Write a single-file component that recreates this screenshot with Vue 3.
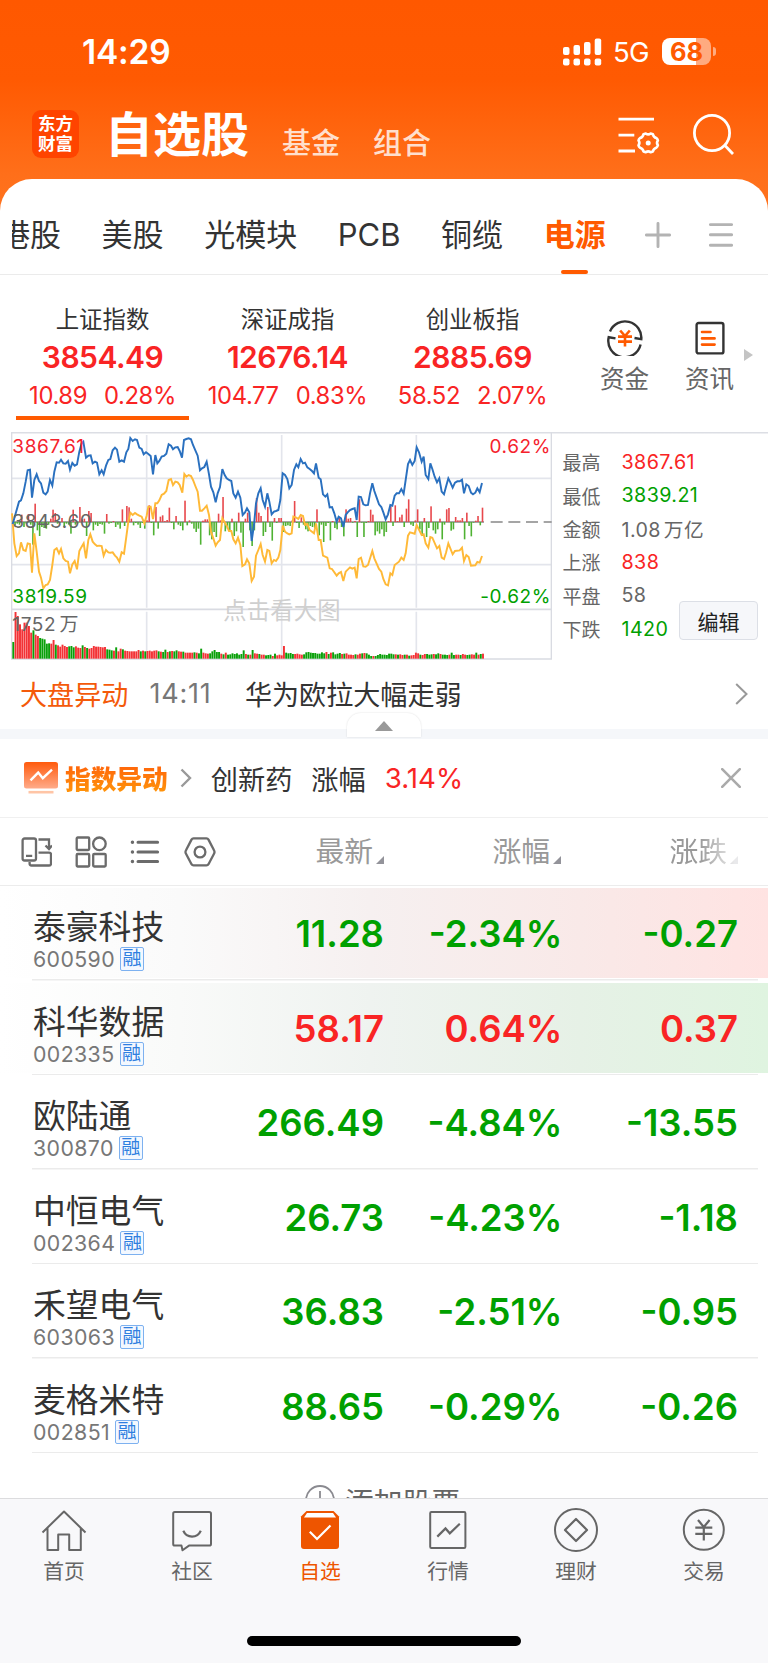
<template>
  <div class="page">
    <header class="header">
      <div class="status-bar">
        <span class="time">14:29</span>
        <div class="status-right">
          <svg class="signal" width="39" height="28" viewBox="0 0 39 28" fill="#fff">
            <rect x="0" y="9" width="6.5" height="8" rx="2" />
            <rect x="10.5" y="7" width="6.5" height="10" rx="2" />
            <rect x="21" y="4" width="6.5" height="13" rx="2" />
            <rect x="31.7" y="0.5" width="6.5" height="16.5" rx="2" />
            <rect x="0" y="20.5" width="6.5" height="7" rx="2" />
            <rect x="10.5" y="20.5" width="6.5" height="7" rx="2" />
            <rect x="21" y="20.5" width="6.5" height="7" rx="2" />
            <rect x="31.7" y="20.5" width="6.5" height="7" rx="2" />
          </svg>
          <span class="network">5G</span>
          <div class="battery">68</div>
          <span class="battery-nub"></span>
        </div>
      </div>
      <div class="title-bar">
        <div class="logo">
          <span>东方</span>
          <span>财富</span>
        </div>
        <h1 class="title">自选股</h1>
        <span class="sub-title">基金</span>
        <span class="sub-title">组合</span>
        <svg class="icon-manage" width="42" height="40" viewBox="0 0 42 40" fill="none" stroke="#fff" stroke-width="2.8">
          <path d="M0.5 3.2H36M0.5 19.2H16.3M0.5 35H17" />
          <path stroke-width="2.6" stroke-linejoin="round" d="M25.5 18.2l2.3 -0.7q2.4 1.8 4.8 0l2.3 0.7q0.6 3 3.4 3.9q1.4 1.2 1.6 2.4q-1.8 2.4 0 4.8q-0.4 1.6 -1.6 2.4q-2.8 0.8 -3.4 3.7l-2.3 0.8q-2.4 -1.8 -4.8 0l-2.3 -0.8q-0.6 -2.9 -3.4 -3.7q-1.2 -0.9 -1.6 -2.4q1.8 -2.4 0 -4.8q0.2 -1.2 1.6 -2.4q2.8 -0.9 3.4 -3.9z" />
          <circle cx="30.2" cy="26.9" r="2.5" fill="#fff" stroke="none" />
        </svg>
        <svg class="icon-search" width="42" height="42" viewBox="0 0 42 42" fill="none" stroke="#fff" stroke-width="2.8">
          <circle cx="19" cy="19" r="17.6" />
          <path d="M31.5 31L40 40" />
        </svg>
      </div>
    </header>

    <main class="card">
      <nav class="groups">
        <div class="group-scroll">
          <div class="group-list">
            <span v-for="g in groups" :key="g" class="group" :class="{ active: g === '电源' }">{{ g }}</span>
          </div>
        </div>
        <svg class="icon-plus" width="26" height="26" viewBox="0 0 26 26" stroke="#b3b3b3" stroke-width="2.9" stroke-linecap="round">
          <path d="M13 1.4V24.6M1.4 13H24.6" />
        </svg>
        <svg class="icon-menu" width="24" height="26" viewBox="0 0 24 26" stroke="#b3b3b3" stroke-width="2.9" stroke-linecap="round">
          <path d="M1.4 2.6H22.6M1.4 12.8H22.6M1.4 23.2H22.6" />
        </svg>
      </nav>

      <section class="indices">
        <div v-for="(item, i) in indices" :key="item.name" class="index" :class="{ current: i === 0 }">
          <div class="index-name">{{ item.name }}</div>
          <div class="index-value">{{ item.value }}</div>
          <div class="index-change">
            <span>{{ item.diff }}</span>
            <span>{{ item.rate }}</span>
          </div>
        </div>
        <div class="shortcut funds">
          <svg width="36" height="36" viewBox="0 0 36 36" fill="none" stroke="#333" stroke-width="2.4">
            <path d="M3 11.5A16.3 16.3 0 0 1 34.3 19.2L27.5 18" />
            <path d="M33.6 24.5A16.3 16.3 0 0 1 1.7 17.2L8.5 18.4" />
            <path stroke="#ff5a00" stroke-width="2.6" d="M13.2 10.5L18 16L22.8 10.5M11 16.6H25M11 21.6H25M18 16V26.5" />
          </svg>
          <span>资金</span>
        </div>
        <div class="shortcut">
          <svg width="36" height="36" viewBox="0 0 36 36" fill="none" stroke="#333" stroke-width="2.4">
            <rect x="4.6" y="3" width="26.8" height="30.4" rx="2" />
            <path stroke="#ff5a00" stroke-width="2.6" stroke-linecap="round" d="M10 12H18.5M10 18.4H22.6M10 24.6H22.6" />
          </svg>
          <span>资讯</span>
        </div>
        <i class="more-arrow"></i>
      </section>

      <section class="market">
        <svg class="chart" width="541" height="228" viewBox="33 21 1623 684" fill="none">
          <g stroke="#e3e5ec" stroke-width="5">
            <path d="M35 160H1655M35 419H1655" />
            <path d="M440 30V548M845 30V548M1249 30V548M440 560V702M845 560V702M1249 560V702" />
            <path stroke="#d9dbe2" d="M35 553H1655" />
            <path stroke="#d9dbe2" stroke-width="4" d="M35 22V702H1654V22" />
          </g>
          <path stroke="#888" stroke-width="4" d="M38 291H1452" />
          <path stroke="#888" stroke-width="4" stroke-dasharray="36 17" d="M1472 291H1655" />
          <rect
            v-for="(v, i) in flow"
            :key="'f' + i"
            :x="36 + i * step"
            :y="v > 0 ? 291 - v : 291"
            width="4.8"
            :height="Math.abs(v)"
            :fill="v > 0 ? '#e8484c' : '#4fb233'"
          />
          <rect
            v-for="(v, i) in volume"
            :key="'v' + i"
            :x="37 + i * step"
            :y="701 - Math.abs(v)"
            width="5.8"
            :height="Math.abs(v)"
            :fill="v > 0 ? '#f33236' : '#0aa00a'"
          />
          <polyline :points="avgLine" stroke="#ffb937" stroke-width="5.8" />
          <polyline :points="priceLine" stroke="#2a70bf" stroke-width="5.8" />
          <g class="chart-text">
            <text x="37" y="84" fill="#f5222d">3867.61</text>
            <text x="37" y="309" fill="#666">3843.60</text>
            <text x="37" y="533" fill="#00a000">3819.59</text>
            <text x="37" y="618" fill="#666">1752<tspan dx="10">万</tspan></text>
            <text x="1653" y="84" text-anchor="end" fill="#f5222d">0.62%</text>
            <text x="1653" y="533" text-anchor="end" fill="#00a000">-0.62%</text>
            <text class="hint" x="670" y="582" fill="#cfcfcf">点击看大图</text>
          </g>
        </svg>
        <dl class="summary">
          <div v-for="s in summary" :key="s.label" class="summary-row">
            <dt>{{ s.label }}</dt>
            <dd :class="s.color">{{ s.value }}</dd>
          </div>
          <button class="edit">编辑</button>
        </dl>
      </section>

      <section class="news">
        <span class="news-tag">大盘异动</span>
        <span class="news-time">14:11</span>
        <span class="news-text">华为欧拉大幅走弱</span>
        <svg class="news-arrow" width="13" height="22" viewBox="0 0 13 22" fill="none" stroke="#999" stroke-width="2">
          <path d="M1.2 1L11.5 11L1.2 21" />
        </svg>
      </section>
      <div class="divider-strip">
        <div class="collapse"><i></i></div>
      </div>

      <section class="alert">
        <svg class="alert-icon" width="34" height="32" viewBox="0 0 34 32" fill="none">
          <defs>
            <linearGradient id="alertFill" x1="0" y1="0" x2="0" y2="1">
              <stop offset="0" stop-color="#ff5a0c" />
              <stop offset="1" stop-color="#ffab8a" />
            </linearGradient>
          </defs>
          <rect x="0" y="0" width="34" height="26.5" rx="2.5" fill="url(#alertFill)" />
          <path d="M6.5 18.3L14.2 10.6L18.8 16.2L28 7.6" stroke="#fff" stroke-width="2.4" />
          <path d="M4.5 30.2H29.5" stroke="#ffc5a6" stroke-width="2.6" />
        </svg>
        <span class="alert-title">指数异动</span>
        <svg class="alert-arrow" width="12" height="20" viewBox="0 0 12 20" fill="none" stroke="#999" stroke-width="2.4">
          <path d="M1.5 1.5L10 10L1.5 18.5" />
        </svg>
        <span class="alert-name">创新药</span>
        <span class="alert-label">涨幅</span>
        <span class="alert-rate">3.14%</span>
        <svg class="alert-close" width="20" height="20" viewBox="0 0 20 20" stroke="#aaa" stroke-width="2.6" stroke-linecap="round">
          <path d="M1.2 1.2L18.8 18.8M18.8 1.2L1.2 18.8" />
        </svg>
      </section>

      <section class="table-head">
        <div class="tools">
          <svg width="32" height="32" viewBox="0 0 32 32" fill="none" stroke="#6b6b6b" stroke-width="2.3">
            <rect x="2.6" y="2.5" width="13.4" height="22" rx="2" />
            <path d="M6 19.8H12.2M18.5 3.5H29V11.5M25.5 9.5L29 13L32 9.5" />
            <path d="M18.5 16.7H29.2Q31 16.7 31 18.5V27.5Q31 29.5 29.2 29.5H11.5Q9.6 29.5 9.6 27.5V26" />
          </svg>
          <svg width="32" height="32" viewBox="0 0 32 32" fill="none" stroke="#6b6b6b" stroke-width="2.3">
            <rect x="1.7" y="1.5" width="12.5" height="12.5" rx="1" />
            <circle cx="24.4" cy="7.8" r="6.3" />
            <rect x="1.7" y="18" width="12.5" height="12.5" rx="1" />
            <rect x="18.2" y="18" width="12.5" height="12.5" rx="1" />
          </svg>
          <svg width="32" height="32" viewBox="0 0 32 32" fill="none" stroke="#6b6b6b" stroke-width="3" stroke-linecap="round">
            <path d="M9 6.2H28.6M9 16H28.6M9 25.5H28.6" />
            <path stroke-width="3.4" d="M3.4 6.2H3.5M3.4 16H3.5M3.4 25.5H3.5" />
          </svg>
          <svg width="32" height="32" viewBox="0 0 32 32" fill="none" stroke="#6b6b6b" stroke-width="2.3" stroke-linejoin="round">
            <path d="M9.5 2.4H22.5Q23.8 2.4 24.5 3.6L30 14.2Q31 16 30 17.8L24.5 28.2Q23.8 29.4 22.5 29.4H9.5Q8.2 29.4 7.5 28.2L2 17.8Q1 16 2 14.2L7.5 3.6Q8.2 2.4 9.5 2.4Z" />
            <circle cx="16" cy="16" r="5.4" />
          </svg>
        </div>
        <span class="head-cell col-price">最新<i></i></span>
        <span class="head-cell col-rate">涨幅<i></i></span>
        <span class="head-cell col-diff fading">涨跌<i></i></span>
      </section>

      <section class="stocks">
        <div v-for="s in stocks" :key="s.code" class="stock" :class="s.flash">
          <div class="stock-info">
            <div class="stock-name">{{ s.name }}</div>
            <div class="stock-code">{{ s.code }}<span class="tag">融</span></div>
          </div>
          <span class="num col-price" :class="s.dir">{{ s.price }}</span>
          <span class="num col-rate" :class="s.dir">{{ s.rate }}</span>
          <span class="num col-diff" :class="s.dir">{{ s.diff }}</span>
        </div>
      </section>

      <div class="add-stock">
        <svg width="30" height="30" viewBox="0 0 30 30" fill="none" stroke="#8a8a90" stroke-width="1.8">
          <circle cx="15" cy="15" r="14" />
          <path d="M15 6V24M6 15H24" />
        </svg>
        <span>添加股票</span>
      </div>
    </main>

    <footer class="tab-bar">
      <div class="tabs">
        <div class="tab">
          <svg width="46" height="44" viewBox="0 0 46 44" fill="none" stroke="#666" stroke-width="2">
            <path d="M1.5 23.5L23 2.5L44.5 23.5M6.5 19V41H17.2V25.5H28.2V41H39.8V19" stroke-linejoin="round" />
          </svg>
          <span>首页</span>
        </div>
        <div class="tab">
          <svg width="46" height="44" viewBox="0 0 46 44" fill="none" stroke="#666" stroke-width="2" stroke-linejoin="round">
            <path d="M5.8 3H40.2Q42 3 42 4.8V35Q42 36.6 40.2 36.6H20L13.5 41.3L12.5 36.6H5.8Q4.2 36.6 4.2 35V4.8Q4.2 3 5.8 3Z" />
            <path stroke-width="2.2" d="M14.3 21.8C17.8 29.6 28.2 29.6 31.8 21.8" />
          </svg>
          <span>社区</span>
        </div>
        <div class="tab active">
          <svg width="46" height="44" viewBox="0 0 46 44" fill="none">
            <path fill="#ee5500" d="M9.5 2H36.5L42 7.5V37Q42 40 39 40H7Q4 40 4 37V7.5Z" />
            <path fill="#fff" d="M10 4H36L39 8.4H7Z" />
            <path stroke="#fff" stroke-width="2.2" d="M12.8 22.8L20 30L33.5 16.5" />
          </svg>
          <span>自选</span>
        </div>
        <div class="tab">
          <svg width="46" height="44" viewBox="0 0 46 44" fill="none" stroke="#666" stroke-width="2">
            <rect x="5.2" y="3" width="35.2" height="36" rx="1.2" />
            <path stroke-width="2.2" d="M12.3 27.6L20.5 19.4L24.8 24.3L34.8 14.8" />
          </svg>
          <span>行情</span>
        </div>
        <div class="tab">
          <svg width="46" height="44" viewBox="0 0 46 44" fill="none" stroke="#666" stroke-width="2">
            <circle cx="23" cy="21" r="21" />
            <path stroke-linejoin="round" stroke-width="2.2" d="M23 10L34 21L23 32L12 21Z" />
          </svg>
          <span>理财</span>
        </div>
        <div class="tab">
          <svg width="46" height="44" viewBox="0 0 46 44" fill="none" stroke="#666" stroke-width="2">
            <circle cx="22.8" cy="20.8" r="20" />
            <path stroke-width="2.2" d="M17 11L22.8 18L28.6 11M14.3 18.6H31.3M14.3 24.8H31.3M22.8 18V31.5" />
          </svg>
          <span>交易</span>
        </div>
      </div>
      <div class="home-indicator"></div>
    </footer>
  </div>
</template>

<script setup>
const groups = ['港股', '美股', '光模块', 'PCB', '铜缆', '电源']

const indices = [
  { name: '上证指数', value: '3854.49', diff: '10.89', rate: '0.28%' },
  { name: '深证成指', value: '12676.14', diff: '104.77', rate: '0.83%' },
  { name: '创业板指', value: '2885.69', diff: '58.52', rate: '2.07%' }
]

const summary = [
  { label: '最高', value: '3867.61', color: 'up' },
  { label: '最低', value: '3839.21', color: 'down' },
  { label: '金额', value: '1.08 万亿', color: '' },
  { label: '上涨', value: '838', color: 'up' },
  { label: '平盘', value: '58', color: '' },
  { label: '下跌', value: '1420', color: 'down' }
]

const stocks = [
  { name: '泰豪科技', code: '600590', price: '11.28', rate: '-2.34%', diff: '-0.27', dir: 'down', flash: 'flash-red' },
  { name: '科华数据', code: '002335', price: '58.17', rate: '0.64%', diff: '0.37', dir: 'up', flash: 'flash-green' },
  { name: '欧陆通', code: '300870', price: '266.49', rate: '-4.84%', diff: '-13.55', dir: 'down' },
  { name: '中恒电气', code: '002364', price: '26.73', rate: '-4.23%', diff: '-1.18', dir: 'down' },
  { name: '禾望电气', code: '603063', price: '36.83', rate: '-2.51%', diff: '-0.95', dir: 'down' },
  { name: '麦格米特', code: '002851', price: '88.65', rate: '-0.29%', diff: '-0.26', dir: 'down' }
]

// 分时图每根柱子的间距
const step = 6.71

// 价格线
const priceLine = '38,297 48,262 57,230 63,226 70,205 77,170 83,136 90,134 96,218 103,165 110,148 117,168 123,175 130,203 137,208 143,200 150,165 157,182 163,140 170,112 177,113 183,104 190,115 197,116 204,108 210,134 217,114 224,122 231,118 238,80 245,55 250,50 258,98 265,92 272,91 278,115 285,110 291,113 298,148 305,136 311,148 318,122 325,105 331,102 338,76 345,68 351,74 358,110 365,106 372,110 379,82 385,72 391,39 398,48 405,43 411,45 418,68 425,72 431,88 438,82 445,87 452,93 459,148 466,90 472,115 478,108 485,95 492,93 499,86 506,58 513,62 519,73 526,67 533,66 539,78 546,98 552,45 559,42 566,40 573,43 579,60 586,76 593,92 600,136 606,130 613,126 620,110 627,148 633,185 640,202 647,232 653,205 660,186 667,132 674,150 680,160 687,165 694,168 700,205 707,218 714,200 721,218 728,270 735,262 741,250 748,262 755,348 762,300 768,235 775,205 782,190 788,225 795,245 802,205 808,230 815,268 822,260 828,258 835,255 841,225 848,145 855,150 862,162 868,190 875,180 882,135 889,118 895,127 902,102 909,115 915,113 922,127 929,132 936,138 942,145 948,115 956,158 962,163 969,208 976,215 982,208 989,247 996,246 1003,265 1010,290 1016,275 1023,280 1030,306 1037,270 1043,262 1050,255 1057,252 1064,250 1070,285 1076,215 1083,216 1090,238 1097,241 1104,240 1110,205 1117,175 1123,198 1130,218 1137,238 1144,246 1150,262 1157,283 1164,268 1171,240 1177,242 1184,212 1190,205 1197,205 1204,192 1211,206 1217,165 1224,117 1230,105 1237,120 1244,108 1250,67 1257,82 1265,110 1271,95 1277,150 1285,162 1291,115 1297,132 1304,155 1311,172 1318,160 1325,200 1332,208 1338,185 1345,160 1351,172 1358,188 1365,173 1372,169 1379,169 1386,164 1392,205 1399,178 1406,183 1413,203 1419,208 1426,203 1432,190 1439,202 1446,174'

// 黄线（不加权）
const avgLine = '36,265 43,355 50,393 57,385 63,352 70,375 77,378 83,355 90,357 96,443 103,325 110,380 117,440 123,458 130,490 137,480 143,478 150,465 157,420 163,375 170,370 177,385 183,372 190,400 197,408 204,410 210,445 217,418 224,408 231,433 238,378 245,365 251,355 258,400 265,345 271,328 278,350 285,358 291,363 298,362 305,363 311,392 318,375 325,382 331,383 338,382 345,392 351,398 358,410 365,382 372,386 379,335 385,290 391,263 398,270 405,264 411,268 418,272 425,275 433,295 440,272 445,245 452,245 459,282 466,235 472,235 478,226 485,210 492,206 499,198 506,165 513,162 519,180 526,170 533,172 539,180 547,203 553,147 559,155 566,150 573,153 579,165 586,183 593,200 600,257 606,257 613,250 620,242 627,270 633,320 640,340 647,362 653,352 660,345 667,280 674,292 680,302 687,318 694,318 700,343 707,355 714,338 721,360 727,423 735,418 741,403 748,416 755,468 762,455 768,392 775,375 782,357 788,390 795,410 802,375 808,378 815,415 822,405 828,408 835,398 841,375 848,302 855,320 862,325 868,328 875,325 880,275 889,278 895,282 902,270 909,273 915,300 922,297 929,315 936,320 942,325 948,295 956,345 962,345 969,392 982,398 989,430 996,432 1010,452 1016,445 1023,441 1030,468 1037,440 1050,427 1057,431 1064,428 1070,460 1076,402 1083,398 1090,424 1097,425 1104,420 1117,378 1123,400 1137,432 1144,440 1150,462 1157,478 1164,481 1171,445 1177,450 1184,420 1197,410 1204,398 1211,405 1217,385 1224,332 1230,322 1244,326 1250,300 1265,330 1271,328 1277,355 1285,368 1291,336 1297,338 1311,370 1318,363 1325,398 1332,402 1338,383 1345,355 1358,388 1365,378 1379,376 1386,368 1392,408 1399,390 1406,396 1413,422 1426,421 1432,411 1439,413 1446,393'

// 红绿柱，正数向上为红，负数向下为绿
const flow = [
  -5, -10, -5, -8, 22, -15, -5, 24, -8, -68, 55, -25, -42, -15, -18, -20, -8, 10, 37, 27,
  -5, -3, 12, -15, -5, -8, -35, 37, -8, -5, 45, 8, 10, -42, 33, 27, -25, -8, -12, -6,
  -8, -35, 24, -5, -3, 3, -15, -8, -20, 38, -12, 48, 44, 10, -10, -3, -8, -18, -3, -20,
  5, 50, -3, -40, 45, -20, 16, 20, 3, 6, 43, -3, -22, 18, -8, -12, -25, 64, -10, 5,
  -5, -20, -30, -20, -68, 4, 8, 8, -40, -52, -30, -45, 25, 5, 75, -28, -20, -28, 10, -42,
  -28, 28, -32, -75, 10, 28, -25, -72, -25, 72, 28, 18, -42, -30, 45, -15, -56, 12, -3, 12,
  12, -30, -12, -10, -12, 5, 63, -3, -18, 14, -8, -22, -28, -12, -15, -18, 38, -40, -8, -60,
  -12, -3, -55, 3, -18, -22, 14, -15, -43, 38, 10, 12, -2, 3, -45, 68, -2, -45, -3, 3,
  37, 22, -40, -28, -35, -22, -43, -30, 3, 47, -12, 50, 3, 14, 22, -15, 40, 68, -8, -12,
  5, 38, -22, -42, 12, -45, -18, 47, -25, -35, -22, 10, -52, -8, 38, 42, -26, -22, 15, 5,
  5, 12, -52, 28, -12, -43, -2, 4, 18, -10, 43
]

// 成交量，正负只区分颜色
const volume = [
  -50, 140, 128, 103, 88, 108, 108, 98, 78, -85, 72, 68, -62, -60, -58, -45, -46, 45, 56, -42,
  40, 36, 42, 38, 35, -37, -38, -34, 37, 33, 32, -40, 35, -32, 30, 32, 38, 36, 36, 35,
  34, 35, -28, -27, -25, 24, -34, 22, 30, -28, 24, 23, 22, 22, 22, 22, 26, -22, 24, -22,
  23, 24, 22, 24, 25, -22, 21, -20, -27, 20, -22, 23, -22, -25, 22, 21, -21, 18, 18, 18,
  18, -19, 18, -16, -30, 18, 16, 15, -16, -22, -26, -20, -20, 15, -13, 18, -12, -13, -16, -14,
  -16, -12, -14, -25, 14, -12, 12, -26, 16, 15, -14, 12, 12, -10, -11, -12, 8, -15, 10, 12,
  10, 38, -18, -16, -17, -14, 14, 15, 13, 12, -13, -19, -20, -18, -17, -17, -15, -15, -19, -16,
  20, -14, 18, -19, -13, -15, -17, 14, -15, 16, 12, 12, 11, -13, 12, 15, -16, 17, -16, -12,
  -8, 8, -8, -11, -14, -12, -12, -11, -15, -15, -13, 13, -12, 13, 11, -12, 12, -9, 10, 11,
  18, 16, -12, 11, 14, -14, -12, -13, 14, -13, -16, 14, -12, -12, -11, 12, -18, -11, 12, 12,
  -11, 14, 12, -11, -12, 13, 12, -18, 12, -14, 15
]
</script>

<style>
body {
  margin: 0;
  background: #fff;
}
</style>

<style scoped>
.page {
  width: 768px;
  height: 1663px;
  overflow: hidden;
  background: #fff;
  color: #333;
  font-family: Inter, "Noto Sans CJK SC", sans-serif;
  display: flex;
  flex-direction: column;
}

.up {
  color: #f92424;
}

.down {
  color: #00a000;
}

/* 顶部 */
.header {
  height: 219px;
  margin-bottom: -40px;
  flex: none;
  background: linear-gradient(#ff5800 0, #ff5a02 80px, #ff6f1a 175px, #ff741f 219px);
  color: #fff;
}

.status-bar {
  height: 103px;
  padding: 0 52px 0 82px;
  display: flex;
  align-items: center;
  justify-content: space-between;
}

.time {
  font-size: 33.5px;
  font-weight: 600;
  letter-spacing: -0.2px;
}

.status-right {
  display: flex;
  align-items: center;
}

.network {
  width: 37px;
  margin: 0 12px 0 11px;
  font-size: 27.5px;
  line-height: 28px;
  letter-spacing: -0.8px;
}

.battery {
  width: 49px;
  height: 27px;
  border-radius: 8px;
  background: linear-gradient(90deg, #fff 69%, #ffab80 69%);
  color: #ff5a00;
  font-size: 25.5px;
  font-weight: 700;
  line-height: 27px;
  text-align: center;
}

.battery-nub {
  width: 3px;
  height: 9px;
  margin-left: 2px;
  border-radius: 0 3px 3px 0;
  background: #ffab80;
}

.title-bar {
  height: 76px;
  padding: 0 33px 0 32px;
  display: flex;
  align-items: flex-start;
}

.logo {
  width: 47px;
  height: 42px;
  margin-top: 7px;
  padding: 3px 0;
  border-radius: 9px;
  background: #ff4400;
  display: flex;
  flex-direction: column;
  align-items: center;
  justify-content: center;
  font-size: 17.5px;
  line-height: 20px;
  font-weight: 700;
}

.title {
  margin: 1px 0 0 26px;
  font-size: 48px;
  line-height: 62px;
  font-weight: 700;
}

.sub-title {
  margin: 21px 0 0 33px;
  font-size: 29px;
  line-height: 40px;
  font-weight: 500;
  color: #ffdfcd;
}

.icon-manage {
  margin: 13px 0 0 auto;
}

.icon-search {
  margin: 11px 0 0 33px;
}

/* 内容卡片 */
.card {
  height: 1319px;
  flex: none;
  overflow: hidden;
  border-radius: 32px 32px 0 0;
  background: #fff;
}

.groups {
  height: 96px;
  padding: 0 35px 0 12px;
  border-bottom: 1px solid #ebebeb;
  box-sizing: border-box;
  display: flex;
}

.group-scroll {
  width: 596px;
  overflow: hidden;
}

.group-list {
  margin-left: -13px;
  width: 620px;
  display: flex;
  gap: 40.6px;
}

.group {
  padding-top: 36px;
  height: 59px;
  line-height: 40px;
  font-size: 31px;
  flex: none;
}

.group.active {
  color: #ff5a00;
  font-weight: 700;
}

.group.active::after {
  content: "";
  display: block;
  width: 27px;
  height: 4px;
  margin: 15px auto 0;
  border-radius: 2px;
  background: #ff5a00;
}

.icon-plus {
  margin: 43px 0 0 37px;
}

.icon-menu {
  margin: 43px 0 0 auto;
}

.indices {
  height: 157px;
  padding-left: 16px;
  display: flex;
}

.index {
  width: 173px;
  height: 145px;
  margin-right: 12px;
  box-sizing: border-box;
  padding-top: 30px;
  text-align: center;
  white-space: nowrap;
}

.index.current {
  border-bottom: 4px solid #ff5a00;
}

.index-name {
  font-size: 23.4px;
  line-height: 30px;
}

.index-value {
  margin-top: 3px;
  font-size: 30px;
  line-height: 38px;
  font-weight: 600;
  letter-spacing: -0.5px;
  color: #f92424;
}

.index-change {
  margin-top: 5px;
  display: flex;
  justify-content: center;
  gap: 17px;
  font-size: 23.8px;
  line-height: 30px;
  letter-spacing: -0.4px;
  color: #f92424;
}

.shortcut {
  width: 50px;
  padding-top: 45px;
  display: flex;
  flex-direction: column;
  align-items: center;
  font-size: 24.5px;
  line-height: 30px;
  color: #666;
}

.shortcut span {
  margin: 8px 1px 0 0;
}

.shortcut.funds {
  margin: 0 35px 0 29px;
}

.more-arrow {
  height: 0;
  margin: 74px 0 0 9px;
  border: 6px solid transparent;
  border-left: 9px solid #c4c4c4;
  border-right: 0;
}

.market {
  height: 228px;
  padding-left: 11px;
  display: flex;
  background: linear-gradient(#dcdee4, #dcdee4) 11px 0 / 100% 1.5px no-repeat;
}

.chart {
  flex: none;
}

.chart-text {
  font-size: 57px;
  letter-spacing: 1.8px;
}

.chart-text .hint {
  font-size: 70px;
  letter-spacing: 0.5px;
}

.summary {
  flex: 1;
  margin: 0;
  padding: 13px 0 0 10.5px;
  position: relative;
}

.summary-row {
  height: 33.4px;
  display: flex;
  align-items: center;
  font-size: 19px;
  color: #666;
}

.summary-row dt {
  width: 59px;
}

.summary-row dd {
  margin: 0;
  font-size: 19.7px;
  letter-spacing: 0.4px;
  word-spacing: -3px;
}

.summary-row dd.up {
  color: #f92424;
}

.summary-row dd.down {
  color: #00a000;
}

.edit {
  position: absolute;
  left: 127px;
  top: 169px;
  width: 79px;
  height: 39px;
  padding: 0;
  border: 1px solid #dcdfe6;
  border-radius: 4px;
  background: #f6f7fa;
  color: #222;
  font-family: inherit;
  font-size: 21px;
}

.news {
  height: 69px;
  padding: 0 20px 2px;
  box-sizing: border-box;
  display: flex;
  align-items: center;
  font-size: 27.1px;
}

.news-tag {
  color: #f45a0a;
}

.news-time {
  width: 95.5px;
  margin-left: 21px;
  font-size: 27px;
  letter-spacing: 0.8px;
  color: #777;
}

.news-arrow {
  margin-left: auto;
}

.divider-strip {
  height: 10px;
  background: #f5f7fa;
  position: relative;
}

.collapse {
  position: absolute;
  left: 347px;
  top: -16px;
  width: 74px;
  height: 24px;
  border-radius: 14px 14px 0 0;
  background: #fff;
  box-shadow: 0 0 2px rgba(0, 0, 0, 0.14);
  display: flex;
  align-items: center;
  justify-content: center;
}

.collapse i {
  margin-top: 2px;
  border: 9.5px solid transparent;
  border-top: 0;
  border-bottom: 10px solid #999;
}

.alert {
  height: 79px;
  padding: 0 27px 1px 24px;
  border-bottom: 1.5px solid #f0f0f0;
  box-sizing: border-box;
  display: flex;
  align-items: center;
  font-size: 27.2px;
}

.alert-title {
  margin-left: 7px;
  font-size: 25.7px;
  font-weight: 900;
  background: linear-gradient(#ff5a0a, #ff9a0a);
  -webkit-background-clip: text;
  background-clip: text;
  color: transparent;
}

.alert-arrow {
  margin-left: 12px;
}

.alert-name {
  margin-left: 19px;
}

.alert-label {
  margin-left: 19px;
}

.alert-rate {
  margin-left: 19px;
  font-size: 27.7px;
  color: #f92424;
}

.alert-close {
  margin-left: auto;
}

/* 列表 */
.table-head {
  height: 68px;
  border-bottom: 1.5px solid #ececec;
  box-sizing: border-box;
  display: flex;
  align-items: center;
}

.tools {
  width: 215px;
  padding-left: 20px;
  box-sizing: border-box;
  display: flex;
  gap: 22.5px;
}

.tools svg {
  flex: none;
}

.head-cell {
  margin-top: 1px;
  display: flex;
  align-items: flex-end;
  justify-content: flex-end;
  font-size: 28.8px;
  line-height: 38px;
  color: #999;
}

.head-cell i {
  margin: 0 0 7px 3px;
  border-left: 8px solid transparent;
  border-bottom: 8px solid #93939a;
}

.head-cell.col-price {
  width: 169px;
}

.head-cell.col-rate {
  width: 177px;
}

.head-cell.col-diff {
  width: 177px;
}

.fading {
  -webkit-mask: linear-gradient(90deg, #000 78%, rgba(0, 0, 0, 0.2) 98%);
  mask: linear-gradient(90deg, #000 78%, rgba(0, 0, 0, 0.2) 98%);
}

.stock {
  height: 94.5px;
  box-sizing: border-box;
  padding-left: 33px;
  display: flex;
  background:
    linear-gradient(#ebebeb, #ebebeb) 32px 100% / 726px 1.5px no-repeat;
}

.stock.flash-red {
  background:
    linear-gradient(#ebebeb, #ebebeb) 32px 100% / 726px 1.5px no-repeat,
    linear-gradient(90deg, #fff 0, #fafafa 180px, #f6f0f0 370px, #f9e9e8 580px, #ffe3e2 768px) 0 2px / 100% 90px no-repeat;
}

.stock.flash-green {
  background:
    linear-gradient(#ebebeb, #ebebeb) 32px 100% / 726px 1.5px no-repeat,
    linear-gradient(90deg, #fff 0, #f9faf9 180px, #eff3f0 370px, #e6f1e6 580px, #dff4e0 768px) 0 2px / 100% 90px no-repeat;
}

.stock-info {
  width: 180px;
  flex: none;
}

.stock-name {
  margin-top: 20px;
  font-size: 32.8px;
  line-height: 42px;
}

.stock-code {
  display: flex;
  align-items: center;
  height: 24px;
  margin-top: -1px;
  font-size: 21.3px;
  line-height: 24px;
  letter-spacing: 0.4px;
  color: #777;
}

.tag {
  width: 22px;
  height: 22px;
  margin-left: 5px;
  border: 1px solid #7db1f0;
  border-radius: 2px;
  background: #f3f8ff;
  color: #2f7fe0;
  font-size: 19px;
  line-height: 21px;
  text-align: center;
  letter-spacing: 0;
}

.num {
  font-size: 36.5px;
  line-height: 96px;
  font-weight: 600;
  text-align: right;
}

.num.col-price {
  width: 171px;
}

.num.col-rate {
  width: 178.5px;
}

.num.col-diff {
  width: 175.5px;
}

.add-stock {
  height: 36px;
  margin: 32px 0 0 305px;
  display: flex;
  align-items: flex-start;
  font-size: 28.8px;
  line-height: 36px;
  color: #666;
}

.add-stock span {
  margin-left: 10px;
}

/* 底部导航 */
.tab-bar {
  height: 165px;
  box-sizing: border-box;
  flex: none;
  border-top: 1px solid #dcdcde;
  background: #f8f8fa;
}

.tabs {
  height: 137px;
  padding-top: 10px;
  box-sizing: border-box;
  display: flex;
}

.tab {
  flex: 1;
  display: flex;
  flex-direction: column;
  align-items: center;
  font-size: 20.8px;
  line-height: 28px;
  color: #666;
}

.tab svg {
  overflow: visible;
}

.tab span {
  margin-top: 5px;
}

.tab.active {
  color: #ee5500;
}

.home-indicator {
  width: 274px;
  height: 10px;
  margin: 0 auto;
  border-radius: 5px;
  background: #000;
}
</style>
